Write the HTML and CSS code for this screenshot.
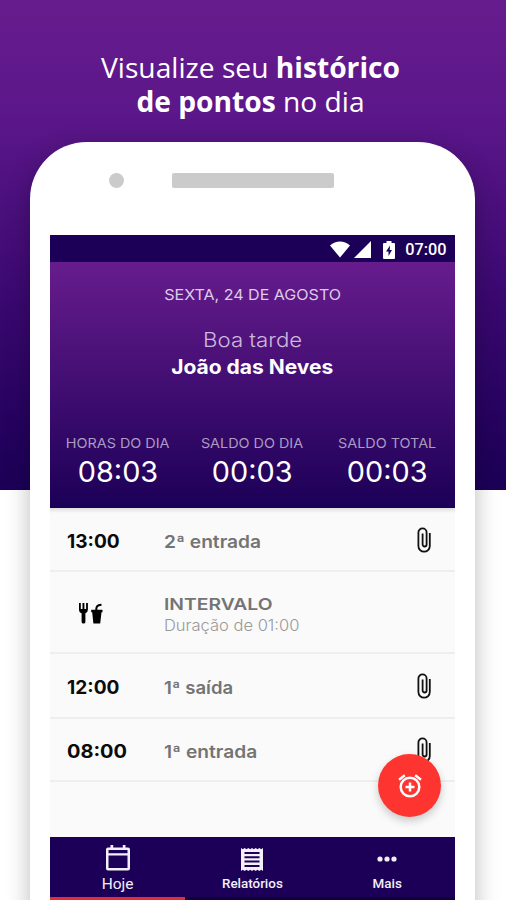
FILE: index.html
```html
<!DOCTYPE html>
<html lang="pt-BR">
<head>
<meta charset="utf-8">
<title>Histórico de pontos</title>
<link rel="stylesheet" href="styles.css">
</head>
<body>
<svg class="defs" width="0" height="0" aria-hidden="true">
  <symbol id="clip" viewBox="0 0 14 26">
    <path d="M12.800 6v13a5.700 5.700 0 0 1-11.400 0V5.500a4.100 4.100 0 0 1 8.200 0v12a2 2 0 0 1-4 0V6.500" fill="none" stroke="currentColor" stroke-width="1.800"/>
  </symbol>
</svg>
<main class="promo">
  <h1 class="headline">Visualize seu <b>histórico</b><br><b>de pontos</b> no dia</h1>
  <section class="phone">
    <div class="bezel"><i class="camera"></i><i class="speaker"></i></div>
    <div class="screen">
      <div class="status">
        <svg class="wifi" width="20" height="17" viewBox="0 0 21 17"><path d="M0 4.200C6-1.200 15-1.200 21 4.200L10.500 17z" fill="#fff"/></svg>
        <svg class="signal" width="17" height="17" viewBox="0 0 17 17"><path d="M17 0v17H0z" fill="#fff"/></svg>
        <svg class="battery" width="12" height="18" viewBox="0 0 12 18"><path d="M3.500 0h5v2H11q1 0 1 1v14q0 1-1 1H1q-1 0-1-1V3q0-1 1-1h2.500z" fill="#fff"/><path d="M7 4.500 3 10.500h2.500V15L9 9H6.700z" fill="#1c0057"/></svg>
        <span class="clock">07:00</span>
      </div>
      <header class="hero">
        <p class="date"><span class="fit">SEXTA, 24 DE AGOSTO</span></p>
        <p class="greeting"><span class="fit">Boa tarde</span></p>
        <p class="name"><span class="fit">João das Neves</span></p>
        <div class="totals">
          <div><p class="label"><span class="fit">HORAS DO DIA</span></p><p class="value"><span class="fit">08:03</span></p></div>
          <div><p class="label"><span class="fit">SALDO DO DIA</span></p><p class="value"><span class="fit">00:03</span></p></div>
          <div><p class="label"><span class="fit">SALDO TOTAL</span></p><p class="value"><span class="fit">00:03</span></p></div>
        </div>
      </header>
      <div class="list">
        <div class="row first"><span class="time narrow"><span class="fit">13:00</span></span><span class="entry"><span class="fit">2ª entrada</span></span><svg class="clip"><use href="#clip"/></svg></div>
        <div class="row break">
          <span class="time"><svg class="meal" width="24" height="21" viewBox="0 0 24 21"><path d="M0 0h1.800v6H3.500V0h1.900v6H7.100V0h1.800v6.500Q8.900 9.500 6.400 10.200V19q0 1.500-1.900 1.500T2.600 19v-8.800Q0 9.500 0 6.500z"/><path d="M12.200 6.800h11.300v2.400h-1l-1.300 11.300h-6.800L13.200 9.200h-1z"/><path d="M17.300 8c-.3-4.500.5-6 5.200-6.300" fill="none" stroke="#000" stroke-width="2"/></svg></span>
          <div class="break-text"><p class="break-title"><span class="fit">INTERVALO</span></p><p class="duration"><span class="fit">Duração de 01:00</span></p></div>
        </div>
        <div class="row third"><span class="time narrow"><span class="fit">12:00</span></span><span class="entry"><span class="fit">1ª saída</span></span><svg class="clip"><use href="#clip"/></svg></div>
        <div class="row fourth"><span class="time"><span class="fit">08:00</span></span><span class="entry"><span class="fit">1ª entrada</span></span><svg class="clip"><use href="#clip"/></svg></div>
        <button class="fab" aria-label="Adicionar"><svg width="24" height="24" viewBox="0 0 24 24" fill="none" stroke="#fff" stroke-width="2.500"><circle cx="12" cy="13" r="9.300"/><path d="M12 8.500v9M7.500 13h9M1 5.800 6.800 1.300M23 5.800 17.200 1.300"/></svg></button>
      </div>
      <nav class="tabs">
        <a class="tab active"><svg width="24" height="26" viewBox="0 0 24 26"><path d="M4.500 0h2.700v2.500h9.600V0h2.700v2.500H22q2 0 2 2v19q0 2-2 2H2q-2 0-2-2v-19q0-2 2-2h2.500zM2.500 5v3.200h19V5zm0 5.500V23h19V10.500z" fill="#f2eff7" fill-rule="evenodd"/></svg><span>Hoje</span></a>
        <a class="tab"><svg width="22" height="23" viewBox="0 0 22 23"><path d="M0 0l1.800 1.300L3.700 0l1.800 1.300L7.300 0l1.900 1.300L11 0l1.800 1.300L14.700 0l1.800 1.300L18.300 0l1.900 1.300L22 0v23l-1.800-1.300-1.900 1.300-1.800-1.300-1.800 1.300-1.900-1.300L11 23l-1.800-1.300L7.300 23l-1.800-1.300L3.700 23l-1.900-1.300L0 23z" fill="#f2eff7"/><path d="M3.500 5h15M3.500 9.300h15M3.500 13.600h15M3.500 17.900h15" stroke="#1c0057" stroke-width="2"/></svg><span>Relatórios</span></a>
        <a class="tab"><svg width="20" height="6" viewBox="0 0 20 6"><g fill="#f2eff7"><circle cx="3" cy="3" r="2.600"/><circle cx="10" cy="3" r="2.600"/><circle cx="17" cy="3" r="2.600"/></g></svg><span>Mais</span></a>
      </nav>
    </div>
  </section>
</main>
</body>
</html>
```
FILE: styles.css
```css
* { box-sizing: border-box; }
body { margin: 0; background: #fff; font-family: Inter, "Liberation Sans", sans-serif; }
p, h1 { margin: 0; }
.defs { position: absolute; }
.fit { display: inline-block; white-space: nowrap; }
.promo {
  width: 506px; height: 900px; overflow: hidden;
  display: flex; flex-direction: column; align-items: center;
  background: linear-gradient(#671c8d, #5c178a 110px, #3a0870 300px, #1c0057 480px, #1c0057 490px, transparent 490px);
}
.headline {
  flex: none; height: 142px; padding: 50px 5px 0 0; text-align: center; color: #fff;
  font: 400 28.200px/34px "Open Sans", "Noto Sans", sans-serif;
}
.phone {
  width: 445px; height: 780px; flex: none; padding: 0 20.600px 0 20px; margin-right: 0.600px;
  background: #fff; border-radius: 57px 57px 0 0; box-shadow: 0 8px 24px rgba(0, 0, 0, .27);
}
.bezel { height: 93px; display: flex; align-items: flex-start; padding: 31px 0 0 59px; }
.camera { width: 15px; height: 15px; border-radius: 50%; background: #cbcbcb; }
.speaker { width: 162px; height: 15px; border-radius: 2px; margin-left: 48px; background: #cbcbcb; }
.screen { display: flex; flex-direction: column; }
.status { height: 27px; background: #1c0057; display: flex; align-items: center; justify-content: flex-end; padding: 2px 8px 0 0; color: #fff; }
.signal { margin-left: 4px; }
.battery { margin-left: 12px; }
.clock { margin-left: 10px; font: 500 16.300px/20px Roboto, sans-serif; }
.hero { height: 246px; background: linear-gradient(#671c8d, #1c0057); color: #fff; text-align: center; padding-top: 23px; }
.date { font-size: 15px; line-height: 20px; color: #dccbe6; }
.date .fit { transform: scaleX(1.070); }
.greeting { font-size: 20px; line-height: 28px; font-weight: 300; color: #cdb8dc; margin-top: 21px; }
.greeting .fit { transform: scaleX(1.110); }
.name { font-size: 20px; line-height: 27px; font-weight: 700; }
.name .fit { transform: scaleX(1.050); }
.totals { display: grid; grid-template-columns: repeat(3, 1fr); padding-top: 53px; }
.label { font-size: 13.500px; line-height: 18px; color: #ac9cc2; }
.label .fit { transform: scaleX(1.065); }
.value { font-size: 28px; line-height: 41px; }
.value .fit { transform: scaleX(1.030); }
.list { position: relative; height: 329px; background: linear-gradient(#dedede, #fafafa 5px); }
.row { display: flex; align-items: center; border-bottom: 2px solid #eee; padding: 4px 24px 0 17px; }
.row .fit { transform-origin: left center; }
.first { height: 64px; }
.break { height: 82px; padding-top: 3px; }
.third { height: 65px; }
.fourth { height: 63px; }
.time { width: 97px; flex: none; font-size: 19px; font-weight: 700; color: #0b0b0b; }
.time .fit { transform: scaleX(1.050); }
.narrow .fit { transform: scaleX(1.005); }
.entry { flex: 1; font-size: 17.500px; font-weight: 600; color: #747474; }
.entry .fit { transform: scaleX(1.095); }
.third .entry .fit { transform: scaleX(1.060); }
.clip { width: 14px; height: 26px; color: #111; margin-top: -3px; }
.meal { display: block; margin-left: 12px; }
.break-text { padding-top: 3px; }
.break-title { font-size: 16.500px; line-height: 22px; font-weight: 600; color: #747474; }
.break-title .fit { transform: scaleX(1.170); }
.duration { font-size: 15.500px; line-height: 22px; color: #999; font-weight: 300; }
.duration .fit { transform: scaleX(1.065); }
.fab { position: absolute; right: 13.500px; bottom: 20px; width: 63px; height: 63px; padding: 0; border: 0; border-radius: 50%; display: flex; align-items: center; justify-content: center; background: #fe3431; box-shadow: 0 4px 8px rgba(0, 0, 0, .2); }
.tabs { height: 63px; display: grid; grid-template-columns: repeat(3, 1fr); background: #1c0057; }
.tab { display: grid; grid-template-rows: 44px 6px; align-content: start; align-items: center; justify-items: center; color: #f2eff7; font: 500 13.400px/6px Roboto, sans-serif; border-bottom: 3px solid #120039; }
.active { font-size: 15.500px; font-weight: 400; border-bottom-color: #e52b38; }
.active svg { margin-top: -3px; }
```
